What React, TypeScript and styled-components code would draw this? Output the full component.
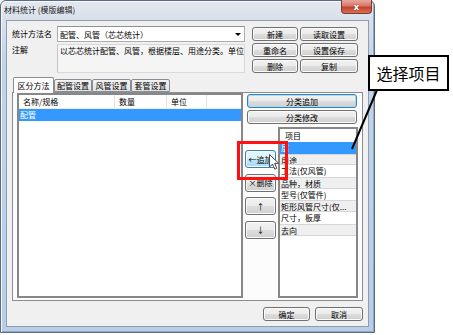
import styled, { createGlobalStyle, css } from "styled-components";

const GlobalStyle = createGlobalStyle`
  html, body {
    margin: 0;
    padding: 0;
    background: #fff;
  }
  body {
    font-family: "Noto Sans CJK SC", "Noto Sans", sans-serif;
    font-size: 8px;
    color: #000;
  }
`;

const Page = styled.div`
  position: relative;
  width: 453px;
  height: 335px;
  overflow: hidden;
  background: #fff;
`;

const Window = styled.div`
  box-sizing: border-box;
  width: 375px;
  height: 333px;
  display: flex;
  flex-direction: column;
  border: 1px solid #5b6b80;
  border-radius: 6px 6px 0 0;
  padding: 0 5px 5px;
  background: linear-gradient(to bottom, #e3e8ef 0px, #d9e0ea 19px, #c2d4ea 60px, #b9cde8 100%);
  box-shadow: inset 1px 1px 0 #f5f8fc, inset -1px -1px 0 #93a8c4;
`;

const TitleBar = styled.div`
  height: 19px;
  display: flex;
  align-items: flex-start;
  justify-content: space-between;
`;

const Title = styled.span`
  margin: 4px 0 0 -2px;
  font-size: 8px;
  line-height: 10px;
  color: #1b1b1b;
`;

const CloseButton = styled.div`
  box-sizing: border-box;
  width: 31px;
  height: 14px;
  margin-right: -3px;
  margin-top: -1px;
  display: flex;
  align-items: center;
  justify-content: center;
  border: 1px solid #7a3a30;
  border-top: none;
  border-radius: 0 0 4px 4px;
  background: linear-gradient(to bottom, #e8aa9e 0%, #d87566 45%, #c5402f 55%, #d6704f 100%);
  color: #fff;
  font-family: "DejaVu Sans", sans-serif;
  font-size: 9px;
  font-weight: bold;
  text-shadow: 0 0 1px #5a1c14;
`;

const Client = styled.div`
  flex: 1;
  box-sizing: border-box;
  display: flex;
  flex-direction: column;
  padding: 5px;
  background: #f0f0f0;
  border: 1px solid #8d9db3;
`;

const TopSection = styled.div`
  display: flex;
  gap: 7px;
`;

const FormCol = styled.div`
  display: flex;
  flex-direction: column;
  gap: 2px;
`;

const FieldRow = styled.div<{ $h: number }>`
  display: flex;
  height: ${(p) => p.$h}px;
  align-items: ${(p) => (p.$h > 20 ? "flex-start" : "center")};
`;

const Label = styled.span`
  width: 45px;
  line-height: 12px;
  white-space: nowrap;
`;

const Combo = styled.div`
  box-sizing: border-box;
  position: relative;
  width: 188px;
  height: 16px;
  display: flex;
  align-items: center;
  padding-left: 2px;
  background: #fff;
  border: 1px solid #abadb3;
  border-top-color: #8e8f8f;
  white-space: nowrap;
`;

const ComboArrow = styled.span`
  margin-left: auto;
  margin-right: 3px;
  width: 0;
  height: 0;
  border-left: 3px solid transparent;
  border-right: 3px solid transparent;
  border-top: 3px solid #000;
`;

const NoteBox = styled.div`
  box-sizing: border-box;
  width: 188px;
  height: 29px;
  padding: 0 2px;
  line-height: 12px;
  overflow: hidden;
  white-space: nowrap;
  background: #f5f5f5;
  border: 1px solid #d9d9d9;
  border-left-color: #c4c4c4;
`;

const ButtonGrid = styled.div`
  display: grid;
  grid-template-columns: 46px 58px;
  grid-auto-rows: 14px;
  gap: 2px;
  margin-top: 1px;
`;

type BtnState = "normal" | "focus" | "hover";

const PushButton = styled.div<{ $state?: BtnState; $w?: number; $h?: number }>`
  box-sizing: border-box;
  display: flex;
  align-items: center;
  justify-content: center;
  ${(p) => p.$w && css`width: ${p.$w}px;`}
  ${(p) => p.$h && css`height: ${p.$h}px;`}
  font-size: 8px;
  white-space: nowrap;
  border: 1px solid #707070;
  border-radius: 3px;
  background: linear-gradient(to bottom, #f2f2f2 0%, #ebebeb 50%, #dddddd 51%, #cfcfcf 100%);
  box-shadow: inset 0 0 0 1px #fbfbfb;
  ${(p) =>
    p.$state === "focus" &&
    css`
      border-color: #3c7fb1;
      box-shadow: inset 0 0 0 1px #a8dcf6;
    `}
  ${(p) =>
    p.$state === "hover" &&
    css`
      border-color: #3c7fb1;
      background: linear-gradient(to bottom, #eaf6fd 0%, #d9f0fc 50%, #bee6fd 51%, #a7d9f5 100%);
    `}
`;

const TabStrip = styled.div`
  display: flex;
  align-items: flex-end;
  height: 15px;
  margin-top: 4px;
  padding-left: 1px;
  position: relative;
  z-index: 1;
`;

const Tab = styled.div<{ $active?: boolean; $w: number }>`
  box-sizing: border-box;
  width: ${(p) => p.$w}px;
  height: ${(p) => (p.$active ? 16 : 13)}px;
  margin-bottom: ${(p) => (p.$active ? -1 : 0)}px;
  display: flex;
  align-items: center;
  justify-content: center;
  white-space: nowrap;
  border: 1px solid #898c95;
  border-bottom: ${(p) => (p.$active ? "none" : "1px solid #898c95")};
  border-radius: 2px 2px 0 0;
  background: ${(p) => (p.$active ? "#fcfcfc" : "linear-gradient(to bottom, #f2f2f2, #e3e3e3)")};
`;

const Panel = styled.div`
  box-sizing: border-box;
  height: 209px;
  display: flex;
  gap: 3px;
  padding: 0 4px 2px 4px;
  background: #fcfcfc;
  border: 1px solid #898c95;
`;

const ListView = styled.div`
  box-sizing: border-box;
  width: 226px;
  background: #fff;
  border: 2px solid #878787;
`;

const ListHeader = styled.div`
  display: flex;
  height: 13px;
  border-bottom: 1px solid #ececec;
`;

const HeaderCell = styled.div<{ $w?: number }>`
  box-sizing: border-box;
  ${(p) => (p.$w ? css`width: ${p.$w}px;` : css`flex: 1;`)}
  padding-left: 4px;
  line-height: 13px;
  border-right: ${(p) => (p.$w ? "1px solid #e3e3e3" : "none")};
`;

const SelectedRow = styled.div`
  height: 12px;
  line-height: 12px;
  padding-left: 1px;
  background: #3399ff;
  color: #fff;
`;

const RightCol = styled.div`
  flex: 1;
  display: flex;
  flex-direction: column;
  padding-top: 1px;
  gap: 2px;
`;

const WideButtonWrap = styled.div`
  padding: 0 1px;
`;

const Lower = styled.div`
  flex: 1;
  display: flex;
  gap: 2px;
  margin-top: 1px;
`;

const ButtonCol = styled.div`
  width: 31px;
  margin-left: -1px;
  display: flex;
  flex-direction: column;
  gap: 5.5px;
  padding-top: 23px;
`;

const ItemList = styled.div`
  box-sizing: border-box;
  flex: 1;
  display: flex;
  flex-direction: column;
  background: #fff;
  border: 2px solid #878787;
  overflow: hidden;
`;

const ItemHeader = styled.div`
  height: 13px;
  line-height: 13px;
  padding-left: 5px;
`;

const Item = styled.div<{ $selected?: boolean; $shade?: boolean }>`
  box-sizing: border-box;
  height: 11.7px;
  line-height: 11px;
  padding-left: 1px;
  white-space: nowrap;
  overflow: hidden;
  ${(p) =>
    p.$shade &&
    css`
      background: #efefef;
      border-top: 1px solid #d6d6d6;
      border-bottom: 1px solid #d6d6d6;
    `}
  ${(p) =>
    p.$selected &&
    css`
      background: #3399ff;
      color: #fff;
    `}
`;

const BottomBar = styled.div`
  display: flex;
  justify-content: flex-end;
  gap: 5px;
  height: 14px;
  margin-top: 6px;
`;

const RedBox = styled.div`
  position: absolute;
  left: 237px;
  top: 141px;
  width: 51px;
  height: 39px;
  box-sizing: border-box;
  border: 3px solid #ff1010;
`;

const Cursor = styled.svg`
  position: absolute;
  left: 269px;
  top: 154px;
`;

const Callout = styled.div`
  position: absolute;
  left: 368px;
  top: 55px;
  width: 81px;
  height: 36px;
  box-sizing: border-box;
  display: flex;
  align-items: center;
  justify-content: center;
  background: #fff;
  border: 2px solid #000;
  font-size: 16px;
  letter-spacing: 0;
`;

const Leader = styled.svg`
  position: absolute;
  left: 0;
  top: 0;
  pointer-events: none;
`;

const items = [
  "层",
  "用途",
  "工法(仅风管)",
  "品种，材质",
  "型号(仅管件)",
  "矩形风管尺寸(仅...",
  "尺寸，板厚",
  "去向",
];

export default function App() {
  return (
    <Page>
      <GlobalStyle />
      <Window>
        <TitleBar>
          <Title>材料统计 (模版编辑)</Title>
          <CloseButton>x</CloseButton>
        </TitleBar>
        <Client>
          <TopSection>
            <FormCol>
              <FieldRow $h={16}>
                <Label>统计方法名</Label>
                <Combo>
                  配管、风管（芯芯统计）
                  <ComboArrow />
                </Combo>
              </FieldRow>
              <FieldRow $h={29}>
                <Label>注解</Label>
                <NoteBox>以芯芯统计配管、风管，根据楼层、用途分类。单位m</NoteBox>
              </FieldRow>
            </FormCol>
            <ButtonGrid>
              <PushButton>新建</PushButton>
              <PushButton>读取设置</PushButton>
              <PushButton>重命名</PushButton>
              <PushButton>设置保存</PushButton>
              <PushButton>删除</PushButton>
              <PushButton>复制</PushButton>
            </ButtonGrid>
          </TopSection>

          <TabStrip>
            <Tab $active $w={41}>区分方法</Tab>
            <Tab $w={38}>配管设置</Tab>
            <Tab $w={39}>风管设置</Tab>
            <Tab $w={39}>套管设置</Tab>
          </TabStrip>
          <Panel>
            <ListView>
              <ListHeader>
                <HeaderCell $w={96}>名称/规格</HeaderCell>
                <HeaderCell $w={52}>数量</HeaderCell>
                <HeaderCell $w={40}>单位</HeaderCell>
                <HeaderCell />
              </ListHeader>
              <SelectedRow>配管</SelectedRow>
            </ListView>
            <RightCol>
              <WideButtonWrap>
                <PushButton $state="focus" $h={14}>分类追加</PushButton>
              </WideButtonWrap>
              <WideButtonWrap>
                <PushButton $h={14}>分类修改</PushButton>
              </WideButtonWrap>
              <Lower>
                <ButtonCol>
                  <PushButton $state="hover" $h={18}>←追加</PushButton>
                  <PushButton $h={18}>×删除</PushButton>
                  <PushButton $h={18}>↑</PushButton>
                  <PushButton $h={18}>↓</PushButton>
                </ButtonCol>
                <ItemList>
                  <ItemHeader>项目</ItemHeader>
                  {items.map((t, i) => (
                    <Item key={t} $selected={i === 0} $shade={i % 2 === 1}>
                      {t}
                    </Item>
                  ))}
                </ItemList>
              </Lower>
            </RightCol>
          </Panel>
          <BottomBar>
            <PushButton $w={47}>确定</PushButton>
            <PushButton $w={48}>取消</PushButton>
          </BottomBar>
        </Client>
      </Window>

      <RedBox />
      <Cursor width="11" height="17" viewBox="0 0 11 17">
        <path d="M0.5 0.5 L0.5 13 L3.5 10 L5.8 15.2 L7.8 14.3 L5.6 9.3 L9.6 9.3 Z" fill="#fff" stroke="#4a4a4a" strokeWidth="1" />
      </Cursor>
      <Leader width="453" height="335">
        <line x1="377" y1="90" x2="352" y2="149" stroke="#000" strokeWidth="2" />
      </Leader>
      <Callout>选择项目</Callout>
    </Page>
  );
}
